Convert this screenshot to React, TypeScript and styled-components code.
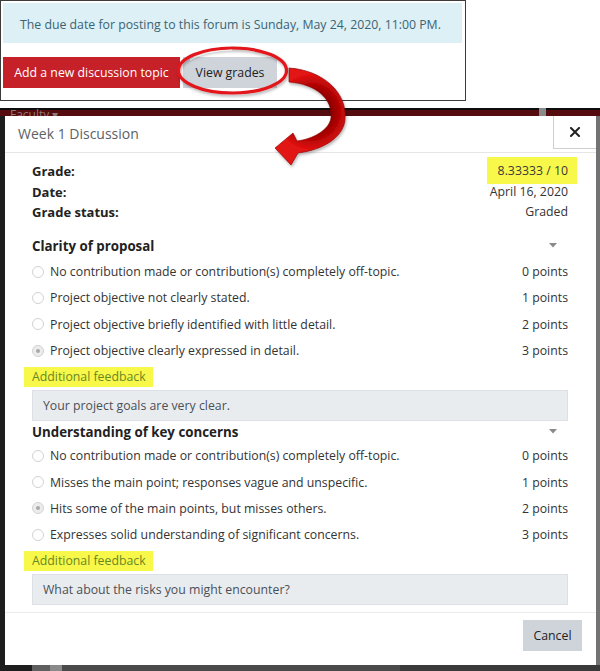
import React from "react";
import styled, { createGlobalStyle } from "styled-components";

const GlobalStyle = createGlobalStyle`
  html, body { margin: 0; padding: 0; background: #fff; }
  body {
    font-family: "Open Sans", "Noto Sans", Arial, sans-serif;
    color: #333;
  }
  * { box-sizing: border-box; }
`;

const Page = styled.div`
  position: relative;
  width: 600px;
  height: 671px;
  overflow: hidden;
  display: flex;
  flex-direction: column;
`;

const TopPanel = styled.section`
  width: 466px;
  height: 101px;
  flex: none;
  border: 1px solid #3c3c3c;
  padding: 2px 3px 0 2px;
  display: flex;
  flex-direction: column;
  gap: 14px;
`;

const Alert = styled.div`
  height: 40px;
  background: #dcf0f6;
  color: #3b6473;
  font-size: 12.3px;
  padding: 2px 0 0 17px;
  display: flex;
  align-items: center;
`;

const ButtonRow = styled.div`
  display: flex;
  gap: 3px;
`;

const Button = styled.button<{ $variant: "primary" | "secondary"; $width: number }>`
  width: ${(p) => p.$width}px;
  height: 31px;
  border: none;
  border-radius: 0;
  padding: 0;
  font-family: inherit;
  font-size: 12.3px;
  display: flex;
  align-items: center;
  justify-content: center;
  background: ${(p) => (p.$variant === "primary" ? "#c62029" : "#ced4da")};
  color: ${(p) => (p.$variant === "primary" ? "#fff" : "#222")};
`;

const Shot = styled.div`
  margin-top: 7px;
  flex: 1;
  display: flex;
  flex-direction: column;
  background: #3d3d3d;
`;

const Band = styled.div`
  height: 8px;
  flex: none;
  overflow: hidden;
  display: flex;
  align-items: flex-start;
  justify-content: space-between;
  padding: 0 54px 0 10px;
  background: linear-gradient(#0d0d0d 0 2px, #560b0e 2px);
`;

const BandText = styled.span`
  color: #8f7878;
  font-size: 12px;
  line-height: 12px;
  margin-top: 1px;
`;

const BandThumb = styled.span`
  width: 7px;
  height: 8px;
  background: #8a8a8a;
`;

const ShotRow = styled.div`
  display: flex;
  flex: none;
`;

const SideStrip = styled.div<{ $side: "left" | "right" }>`
  width: ${(p) => (p.$side === "left" ? "5px" : "auto")};
  flex: ${(p) => (p.$side === "left" ? "none" : "1")};
  background: ${(p) => (p.$side === "left" ? "#1d1d1d" : "#737373")};
`;

const BottomStrip = styled.div`
  flex: 1;
  background: linear-gradient(90deg, #1e1e1e 0 32px, #5f5f5f 32px 50px, #8a8a8a 50px 62px, #4a4a4a 62px 400px, #3a3a3a 400px);
`;

const Modal = styled.div`
  width: 591px;
  flex: none;
  background: #fff;
  display: flex;
  flex-direction: column;
`;

const ModalHeader = styled.header`
  height: 37px;
  border-bottom: 1px solid #e6e6e6;
  display: flex;
  justify-content: space-between;
  align-items: flex-start;
`;

const ModalTitle = styled.h2`
  margin: 0;
  padding-left: 13px;
  font-weight: 400;
  font-size: 14px;
  line-height: 36px;
  color: #5b6166;
`;

const CloseButton = styled.button`
  width: 43px;
  height: 33px;
  padding: 0;
  background: #fff;
  border: 1px solid #cfcfcf;
  border-top: none;
  border-right: none;
  display: flex;
  align-items: center;
  justify-content: center;
`;

const ModalBody = styled.div`
  padding: 8px 28px 7px 27px;
  display: flex;
  flex-direction: column;
`;

const InfoList = styled.div`
  display: flex;
  flex-direction: column;
  margin-bottom: 12px;
`;

const InfoRow = styled.div`
  height: 20.5px;
  line-height: 20.5px;
  display: flex;
  justify-content: space-between;
  align-items: center;
`;

const Label = styled.span`
  font-weight: 700;
  font-size: 13px;
  color: #222;
`;

const Value = styled.span`
  font-size: 12.3px;
  color: #333;
`;

const GradeMark = styled.span`
  display: inline-block;
  background: #f8f84a;
  line-height: 20.5px;
  padding: 4px 9px 2px 11px;
  margin: -4px -9px -2px -11px;
  color: #3a3a3a;
`;

const CriterionHeading = styled.div<{ $gap: number }>`
  height: 22px;
  margin-bottom: ${(p) => p.$gap}px;
  display: flex;
  justify-content: space-between;
  align-items: center;
  font-weight: 700;
  font-size: 13.3px;
  color: #222;
`;

const Caret = styled.svg`
  margin-right: 11px;
`;

const LevelRow = styled.div`
  height: 26.3px;
  display: flex;
  align-items: center;
  font-size: 12.3px;
  color: #333;
`;

const Radio = styled.span<{ $checked?: boolean }>`
  width: 12px;
  height: 12px;
  flex: none;
  margin-right: 6px;
  border-radius: 50%;
  border: 1px solid #d2d2d2;
  background: ${(p) => (p.$checked ? "#ececec" : "#fff")};
  display: flex;
  align-items: center;
  justify-content: center;
  &::after {
    content: "";
    width: 4px;
    height: 4px;
    border-radius: 50%;
    background: ${(p) => (p.$checked ? "#a9a9a9" : "transparent")};
  }
`;

const LevelText = styled.span`
  flex: 1;
`;

const FeedbackLabel = styled.div`
  height: 26px;
  display: flex;
  align-items: center;
`;

const FeedbackMark = styled.span`
  display: inline-block;
  background: #f8f84a;
  line-height: 20px;
  padding: 0 7px 0 8px;
  margin: 0 -7px 0 -8px;
  font-size: 12.3px;
  color: #6a8722;
`;

const FeedbackBox = styled.div`
  height: 31px;
  background: #e9ecef;
  border: 1px solid #dde1e5;
  padding: 0 10px;
  display: flex;
  align-items: center;
  font-size: 12.3px;
  color: #495057;
`;

const ModalFooter = styled.footer`
  border-top: 1px solid #e9ecef;
  padding: 7px 14px 14px;
  display: flex;
  justify-content: flex-end;
`;

const Annotation = styled.svg`
  position: absolute;
  left: 0;
  top: 0;
  pointer-events: none;
`;

type Level = { text: string; points: number; checked?: boolean };
type Criterion = { title: string; levels: Level[]; feedback: string; gap: number };

const criteria: Criterion[] = [
  {
    title: "Clarity of proposal",
    gap: 2,
    levels: [
      { text: "No contribution made or contribution(s) completely off-topic.", points: 0 },
      { text: "Project objective not clearly stated.", points: 1 },
      { text: "Project objective briefly identified with little detail.", points: 2 },
      { text: "Project objective clearly expressed in detail.", points: 3, checked: true },
    ],
    feedback: "Your project goals are very clear.",
  },
  {
    title: "Understanding of key concerns",
    gap: 0,
    levels: [
      { text: "No contribution made or contribution(s) completely off-topic.", points: 0 },
      { text: "Misses the main point; responses vague and unspecific.", points: 1 },
      { text: "Hits some of the main points, but misses others.", points: 2, checked: true },
      { text: "Expresses solid understanding of significant concerns.", points: 3 },
    ],
    feedback: "What about the risks you might encounter?",
  },
];

function CriterionBlock({ c }: { c: Criterion }) {
  return (
    <>
      <CriterionHeading $gap={c.gap}>
        <span>{c.title}</span>
        <Caret width="8" height="5" viewBox="0 0 8 5">
          <path d="M0 0 L8 0 L4 4.5 Z" fill="#8a8a8a" />
        </Caret>
      </CriterionHeading>
      {c.levels.map((l, i) => (
        <LevelRow key={i}>
          <Radio $checked={l.checked} />
          <LevelText>{l.text}</LevelText>
          <span>{l.points} points</span>
        </LevelRow>
      ))}
      <FeedbackLabel>
        <FeedbackMark>Additional feedback</FeedbackMark>
      </FeedbackLabel>
      <FeedbackBox>{c.feedback}</FeedbackBox>
    </>
  );
}

export default function App() {
  return (
    <>
      <GlobalStyle />
      <Page>
        <TopPanel>
          <Alert>The due date for posting to this forum is Sunday, May 24, 2020, 11:00 PM.</Alert>
          <ButtonRow>
            <Button $variant="primary" $width={177}>Add a new discussion topic</Button>
            <Button $variant="secondary" $width={94}>View grades</Button>
          </ButtonRow>
        </TopPanel>
        <Shot>
          <Band>
            <BandText>Faculty ▾</BandText>
            <BandThumb />
          </Band>
          <ShotRow>
            <SideStrip $side="left" />
            <Modal>
              <ModalHeader>
                <ModalTitle>Week 1 Discussion</ModalTitle>
                <CloseButton aria-label="Close">
                  <svg width="10" height="10" viewBox="0 0 10 10">
                    <path d="M1 1 L9 9 M9 1 L1 9" stroke="#222" strokeWidth="2" strokeLinecap="square" />
                  </svg>
                </CloseButton>
              </ModalHeader>
              <ModalBody>
                <InfoList>
                  <InfoRow>
                    <Label>Grade:</Label>
                    <Value>
                      <GradeMark>8.33333 / 10</GradeMark>
                    </Value>
                  </InfoRow>
                  <InfoRow>
                    <Label>Date:</Label>
                    <Value>April 16, 2020</Value>
                  </InfoRow>
                  <InfoRow>
                    <Label>Grade status:</Label>
                    <Value>Graded</Value>
                  </InfoRow>
                </InfoList>
                {criteria.map((c) => (
                  <CriterionBlock key={c.title} c={c} />
                ))}
              </ModalBody>
              <ModalFooter>
                <Button $variant="secondary" $width={59}>Cancel</Button>
              </ModalFooter>
            </Modal>
            <SideStrip $side="right" />
          </ShotRow>
          <BottomStrip />
        </Shot>
        <Annotation width="600" height="200" viewBox="0 0 600 200">
          <defs>
            <filter id="shadow" x="-20%" y="-20%" width="140%" height="140%">
              <feDropShadow dx="1" dy="2" stdDeviation="1.4" floodColor="#000" floodOpacity="0.3" />
            </filter>
            <radialGradient id="arrowFill" gradientUnits="userSpaceOnUse" cx="312" cy="112" r="38">
              <stop offset="0.4" stopColor="#7a0000" />
              <stop offset="0.75" stopColor="#b80606" />
              <stop offset="1" stopColor="#e31212" />
            </radialGradient>
          </defs>
          <ellipse cx="232.5" cy="70.5" rx="54" ry="22.5" fill="none" stroke="#e3141b" strokeWidth="3.2" filter="url(#shadow)" />
          <path d="M190 60 A52 20.5 0 0 1 232 50" fill="none" stroke="#fff" strokeOpacity="0.8" strokeWidth="1" />
          <path
            d="M289 68 C322 70 348 92 345 120 C343 138 322 150 298 153 L291 165 L275 148 L293 133 L297 141 C313 139 329 130 331 118 C333 98 315 84 289 82 Z"
            fill="url(#arrowFill)"
            stroke="#8a0000"
            strokeWidth="0.6"
            filter="url(#shadow)"
          />
        </Annotation>
      </Page>
    </>
  );
}
